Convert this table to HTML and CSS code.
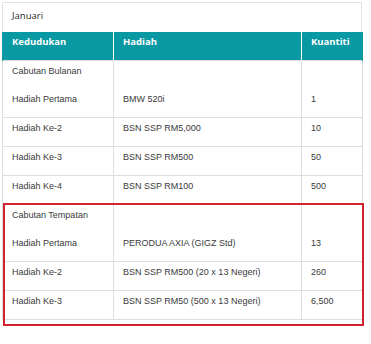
FILE: index.html
```html
<!DOCTYPE html>
<html>
<head>
<meta charset="utf-8">
<link rel="stylesheet" href="styles.css">
</head>
<body>
<div class="page">
  <div class="card">
    <div class="title">Januari</div>
    <table class="prizes">
      <colgroup>
        <col class="c1"><col class="c2"><col class="c3">
      </colgroup>
      <thead>
        <tr><th>Kedudukan</th><th>Hadiah</th><th>Kuantiti</th></tr>
      </thead>
      <tbody>
        <tr class="group">
          <td><div class="glabel">Cabutan Bulanan</div><div>Hadiah Pertama</div></td>
          <td>BMW 520i</td>
          <td>1</td>
        </tr>
        <tr><td>Hadiah Ke-2</td><td>BSN SSP RM5,000</td><td>10</td></tr>
        <tr><td>Hadiah Ke-3</td><td>BSN SSP RM500</td><td>50</td></tr>
        <tr><td>Hadiah Ke-4</td><td>BSN SSP RM100</td><td>500</td></tr>
        <tr class="group">
          <td><div class="glabel">Cabutan Tempatan</div><div>Hadiah Pertama</div></td>
          <td>PERODUA AXIA (GIGZ Std)</td>
          <td>13</td>
        </tr>
        <tr><td>Hadiah Ke-2</td><td>BSN SSP RM500 (20 x 13 Negeri)</td><td>260</td></tr>
        <tr><td>Hadiah Ke-3</td><td>BSN SSP RM50 (500 x 13 Negeri)</td><td>6,500</td></tr>
      </tbody>
    </table>
  </div>
  <div class="highlight"></div>
</div>
</body>
</html>
```
FILE: styles.css
```css
html, body {
  margin: 0;
  padding: 0;
  background: #ffffff;
}
.page {
  position: relative;
  width: 371px;
  height: 344px;
}
.card {
  padding: 2px 0 0 2px;
}
.title {
  box-sizing: border-box;
  width: 360px;
  height: 30px;
  border: 1px solid #e2e2e2;
  border-bottom: none;
  padding: 6px 0 0 9px;
  font-family: "Open Sans", sans-serif;
  font-size: 9.5px;
  line-height: 13px;
  color: #1e1e1e;
}
.prizes {
  border-collapse: collapse;
  table-layout: fixed;
  width: 360px;
  font-family: "Liberation Sans", Arial, sans-serif;
  font-size: 9px;
  color: #3a3a3a;
}
.c1 { width: 111px; }
.c2 { width: 188px; }
.c3 { width: 61px; }
.prizes th {
  background: #0899a3;
  color: #ffffff;
  font-family: "Open Sans", sans-serif;
  font-weight: 700;
  font-size: 9.5px;
  text-align: left;
  height: 28px;
  box-sizing: border-box;
  padding: 2px 8px 10px 9px;
  line-height: 14px;
  border-left: 1px solid #ffffff;
  border-right: 1px solid #ffffff;
}
.prizes th:first-child { border-left: 1px solid #0899a3; }
.prizes th:last-child { border-right: 1px solid #0899a3; }
.prizes td {
  border: 1px solid #dedede;
  padding: 4px 8px 11px 9px;
  line-height: 13px;
  vertical-align: bottom;
}
.prizes .glabel {
  margin-bottom: 15px;
}
.highlight {
  position: absolute;
  left: 3px;
  top: 203px;
  width: 357px;
  height: 119px;
  border: 2px solid #d0232e;
}
```
